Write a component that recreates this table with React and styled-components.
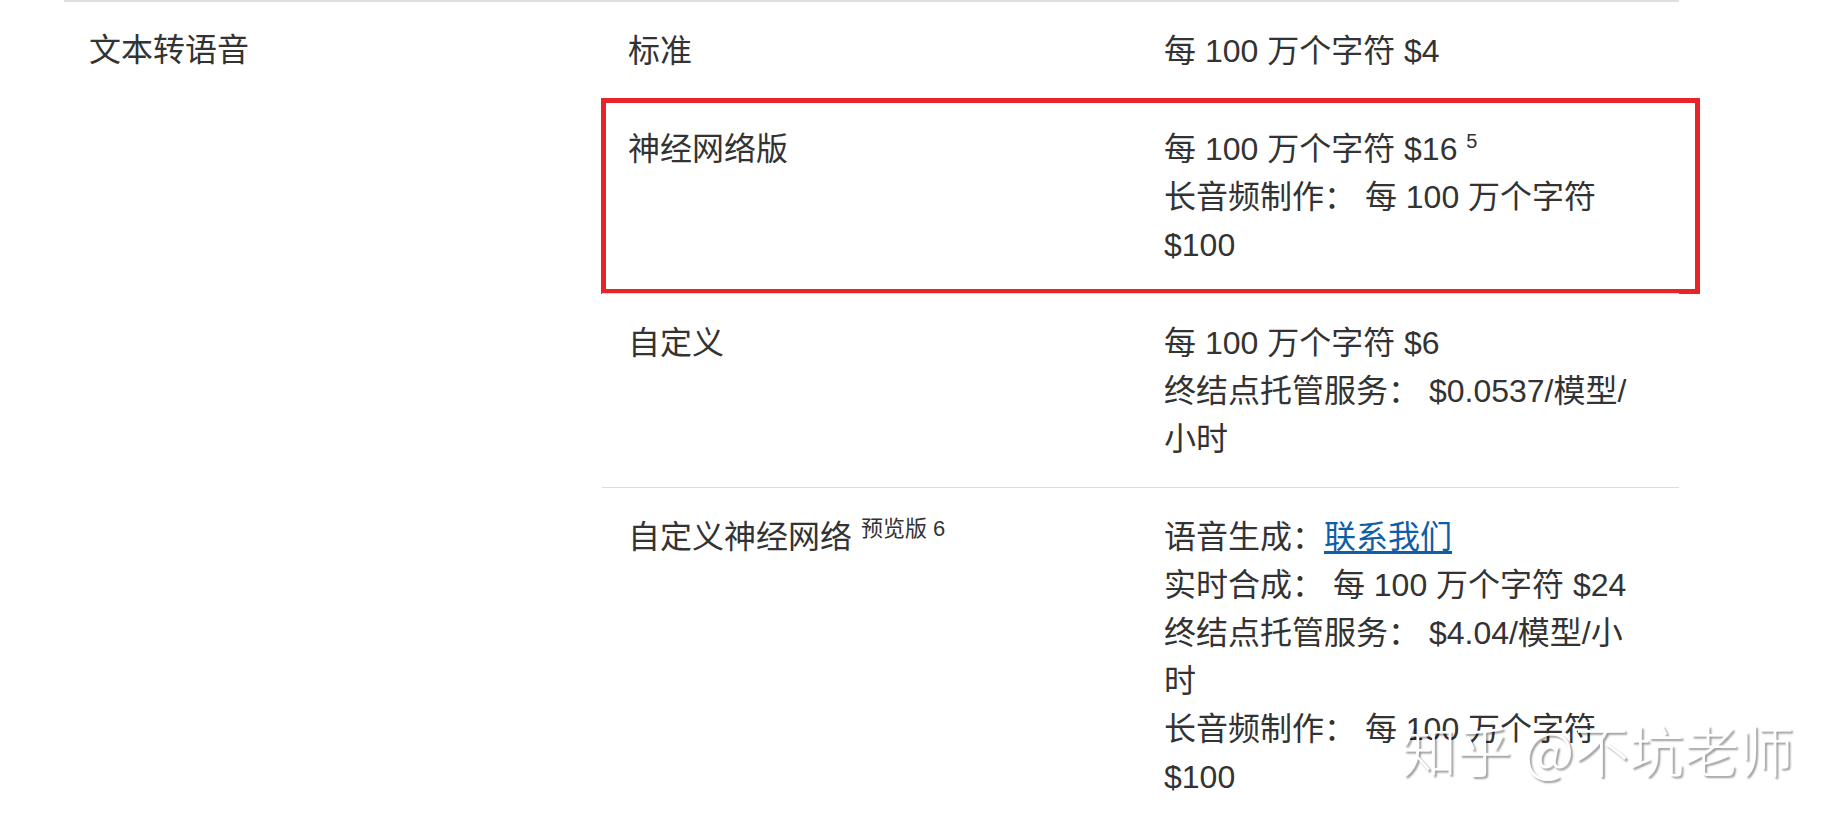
import React from 'react';
import styled, { createGlobalStyle } from 'styled-components';

const GlobalStyle = createGlobalStyle`
    body {
        margin: 0;
        background: #fff;
        font-family: "Liberation Sans", "Noto Sans CJK SC", sans-serif;
        color: #333;
    }
`;

const Page = styled.div`
    position: relative;
    height: 820px;
    overflow: hidden;
    padding-left: 64px;
`;

const Table = styled.div`
    width: 1615px;
    display: grid;
    grid-template-columns: 538px 1fr;
    border-top: 2px solid #dedede;
    font-size: 32px;
    line-height: 48px;
`;

const Category = styled.div`
    padding: 24px 25px;
`;

const SubRows = styled.div`
    display: flex;
    flex-direction: column;
`;

const SubRow = styled.div`
    position: relative;
    display: grid;
    grid-template-columns: 536px 1fr;
    border-top: ${p => (p.$first ? 'none' : '1px solid #dcdcdc')};
    ${p => p.$marked && `
        &::after {
            content: '';
            position: absolute;
            top: -2px;
            left: -1px;
            right: -21px;
            bottom: -1px;
            border: 5px solid #e8232a;
        }
    `}
`;

const Tier = styled.div`
    padding: 25px 26px 24px;
`;

const Price = styled.div`
    padding: 25px 45px 24px 26px;
`;

const Sup = styled.sup`
    font-size: 20px;
    line-height: 0;
    vertical-align: 12px;
`;

const Note = styled.sup`
    font-size: 22px;
    line-height: 0;
    vertical-align: 12px;
`;

const Link = styled.a`
    color: #0f5ea8;
    text-decoration: underline;
    text-underline-offset: 3px;
`;

const Watermark = styled.div`
    position: absolute;
    right: 46px;
    bottom: 44px;
    font-family: "Noto Sans CJK SC", sans-serif;
    font-weight: 300;
    font-size: 55px;
    line-height: 1;
    color: #fff;
    text-shadow: 2px 2px 2px rgba(0, 0, 0, 0.4);
    white-space: nowrap;
`;

const rows = [
    {
        name: '标准',
        lines: ['每 100 万个字符 $4'],
    },
    {
        name: '神经网络版',
        marked: true,
        lines: [<>每 100 万个字符 $16 <Sup>5</Sup></>, '长音频制作： 每 100 万个字符 $100'],
    },
    {
        name: '自定义',
        lines: ['每 100 万个字符 $6', '终结点托管服务： $0.0537/模型/小时'],
    },
    {
        name: <>自定义神经网络 <Note>预览版 6</Note></>,
        lines: [
            <>语音生成：<Link href="#">联系我们</Link></>,
            '实时合成： 每 100 万个字符 $24',
            '终结点托管服务： $4.04/模型/小时',
            '长音频制作： 每 100 万个字符 $100',
        ],
    },
];

const App = () => {
    return (
        <Page>
            <GlobalStyle />
            <Table>
                <Category>文本转语音</Category>
                <SubRows>
                    {rows.map((row, i) => (
                        <SubRow key={i} $first={i === 0} $marked={row.marked}>
                            <Tier>{row.name}</Tier>
                            <Price>
                                {row.lines.map((line, j) => (
                                    <div key={j}>{line}</div>
                                ))}
                            </Price>
                        </SubRow>
                    ))}
                </SubRows>
            </Table>
            <Watermark>知乎 @不坑老师</Watermark>
        </Page>
    )
}

export default App;
